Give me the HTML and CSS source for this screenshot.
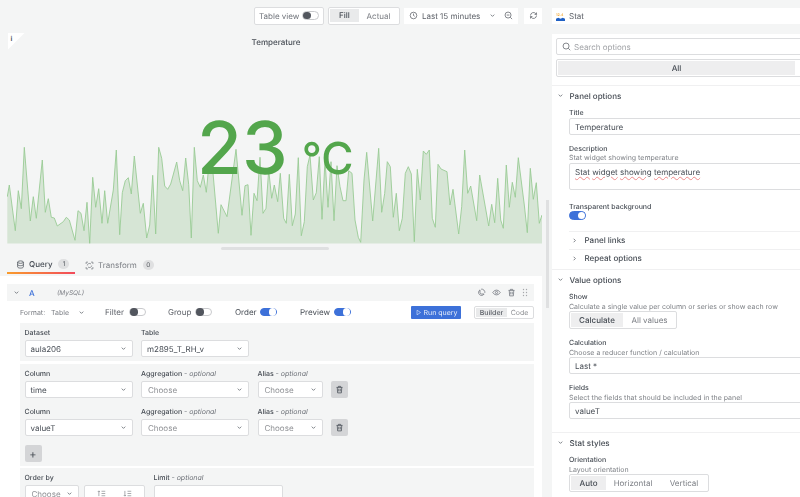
FILE: index.html
```html
<!DOCTYPE html>
<html lang="en">
<head>
  <meta charset="UTF-8">
  <title>Edit panel</title>
  <link rel="stylesheet" href="styles.css">
</head>
<body>
  <div class="page">
    <div class="main">
      <div class="toolbar">
        <div class="box table-view">Table view <span class="switch"></span></div>
        <div class="box seg-fill"><span class="seg-on">Fill</span><span class="seg-off">Actual</span></div>
        <div class="time-group">
          <div class="tool time-btn">
            <svg class="ico" viewBox="0 0 12 12"><circle cx="6" cy="6" r="4.4"/><path d="M6 3.4V6l1.6 1"/></svg>
            Last 15 minutes
            <svg class="chev" viewBox="0 0 8 8"><path d="M2 3l2 2 2-2"/></svg>
          </div>
          <div class="tool zoom-btn">
            <svg class="ico" viewBox="0 0 12 12"><circle cx="5.4" cy="5.4" r="4"/><path d="M3.6 5.4h3.6M8.4 8.4l2.4 2.4"/></svg>
          </div>
        </div>
        <div class="tool refresh-btn">
          <svg class="ico" viewBox="0 0 12 12"><path d="M2 6a4 4 0 0 1 7-2.6l1 1M10 6a4 4 0 0 1-7 2.6l-1-1M10 2v2.6H7.4M2 10V7.4h2.6"/></svg>
        </div>
      </div>

      <div class="panel">
        <div class="corner"><span>i</span></div>
        <div class="panel-title">Temperature</div>
        <svg class="chart" viewBox="7 146 535 98">
          <polygon class="area" points="7.3,243.5 7.3,196.7 9.3,185 15.3,230.7 18.3,190.7 21.3,208.7 24.3,147.3 30.3,221 33.3,196.7 36.3,218.3 42.3,160 45.3,212.3 48.3,198.7 51.3,217.3 54.3,218 57.3,226 63.3,221.7 66.3,217.3 69.3,220 75,240.3 78,210.7 81,213.3 84,230.7 87,202.3 89.7,243.3 92.7,177.3 95.7,207.3 98.7,188.7 102,223.3 104.7,190.7 107.7,223.3 113.3,190 116.3,150 119.7,234.7 122.3,192.7 125.3,180.7 128.3,177.7 131.3,194 134.3,156 140.3,213.3 143.3,203.3 146.7,238 149.7,225 152.7,175.3 155.7,234 158.7,147.3 161.7,158.3 164.7,186 167.7,189.3 170.7,184 176.7,162 179.7,180.7 182.7,190.7 185.7,158 188.7,184.7 191.3,238 194.3,147.3 197.3,180.7 200.3,187.3 203.3,175 206.3,192.3 209,163 212.3,165 218.3,233.3 221,204.7 227,216.7 236,149.3 242,215.3 245,185.7 248,184.7 251,235.3 254,193.3 257,200.7 260,157.3 263,213.3 266,208.3 268.7,170 271.7,198.3 274.3,185 277.7,201.7 280.3,173.3 283.7,218.3 286.3,223.3 289.3,174.3 292.3,225.7 295.3,214 298.3,157.7 301.3,235.7 304.3,221.7 307.3,166.7 310,155 313.3,200 316.3,192.7 319.3,156.7 322,219.3 325,160 328,207.3 331,161.7 334,220.7 337,165.7 340,186.7 343,200.7 346,200.7 348.7,170.7 352,173.3 355,220 358.3,237.3 360.7,242.3 364,180 366.7,152.3 372.7,221 378.7,148.3 381.7,212.3 384.7,193.3 387.3,161.7 390.3,166.7 393.3,217.3 396.3,193.3 399.3,230.7 402.3,218.3 405.3,173.3 408.3,166.7 411.3,174 414.3,241.7 417.3,169.3 420.3,200 423.3,151 426.3,154.3 429.3,150 432.3,218.3 435.3,227.3 438,164.3 441,169 447,171.7 450,205 453,189.3 458.7,234 461.7,206.7 464.7,150 467.7,193.3 470.7,186 476.7,220.7 479.7,175 488.7,226 491.7,204.3 494.7,222.7 497.7,178.3 500.7,220 503.3,228.3 506.3,165 509.3,207.3 512.3,182.3 515.3,197.3 518.3,157.7 524.3,205 527.3,232.7 530.3,168.3 533.3,199.3 536.3,182.7 539.3,223.3 542,215 542,243.5"/>
          <polyline class="line" points="7.3,196.7 9.3,185 15.3,230.7 18.3,190.7 21.3,208.7 24.3,147.3 30.3,221 33.3,196.7 36.3,218.3 42.3,160 45.3,212.3 48.3,198.7 51.3,217.3 54.3,218 57.3,226 63.3,221.7 66.3,217.3 69.3,220 75,240.3 78,210.7 81,213.3 84,230.7 87,202.3 89.7,243.3 92.7,177.3 95.7,207.3 98.7,188.7 102,223.3 104.7,190.7 107.7,223.3 113.3,190 116.3,150 119.7,234.7 122.3,192.7 125.3,180.7 128.3,177.7 131.3,194 134.3,156 140.3,213.3 143.3,203.3 146.7,238 149.7,225 152.7,175.3 155.7,234 158.7,147.3 161.7,158.3 164.7,186 167.7,189.3 170.7,184 176.7,162 179.7,180.7 182.7,190.7 185.7,158 188.7,184.7 191.3,238 194.3,147.3 197.3,180.7 200.3,187.3 203.3,175 206.3,192.3 209,163 212.3,165 218.3,233.3 221,204.7 227,216.7 236,149.3 242,215.3 245,185.7 248,184.7 251,235.3 254,193.3 257,200.7 260,157.3 263,213.3 266,208.3 268.7,170 271.7,198.3 274.3,185 277.7,201.7 280.3,173.3 283.7,218.3 286.3,223.3 289.3,174.3 292.3,225.7 295.3,214 298.3,157.7 301.3,235.7 304.3,221.7 307.3,166.7 310,155 313.3,200 316.3,192.7 319.3,156.7 322,219.3 325,160 328,207.3 331,161.7 334,220.7 337,165.7 340,186.7 343,200.7 346,200.7 348.7,170.7 352,173.3 355,220 358.3,237.3 360.7,242.3 364,180 366.7,152.3 372.7,221 378.7,148.3 381.7,212.3 384.7,193.3 387.3,161.7 390.3,166.7 393.3,217.3 396.3,193.3 399.3,230.7 402.3,218.3 405.3,173.3 408.3,166.7 411.3,174 414.3,241.7 417.3,169.3 420.3,200 423.3,151 426.3,154.3 429.3,150 432.3,218.3 435.3,227.3 438,164.3 441,169 447,171.7 450,205 453,189.3 458.7,234 461.7,206.7 464.7,150 467.7,193.3 470.7,186 476.7,220.7 479.7,175 488.7,226 491.7,204.3 494.7,222.7 497.7,178.3 500.7,220 503.3,228.3 506.3,165 509.3,207.3 512.3,182.3 515.3,197.3 518.3,157.7 524.3,205 527.3,232.7 530.3,168.3 533.3,199.3 536.3,182.7 539.3,223.3 542,215"/>
        </svg>
        <div class="big-value"><span class="digits">23</span><span class="unit">°C</span></div>
      </div>
      <div class="resize-handle"></div>

      <div class="tabs">
        <div class="tab tab-active">
          <svg class="ico" viewBox="0 0 12 12"><ellipse cx="6" cy="2.8" rx="3.8" ry="1.6"/><path d="M2.2 2.8v6.4c0 .9 1.7 1.6 3.8 1.6s3.8-.7 3.8-1.6V2.8M2.2 6c0 .9 1.7 1.6 3.8 1.6S9.8 6.9 9.8 6"/></svg>
          Query <span class="count">1</span>
        </div>
        <div class="tab">
          <svg class="ico" viewBox="0 0 12 12"><path d="M1.5 4V1.5H4M8 1.5h2.5V4M10.5 8v2.5H8M4 10.5H1.5V8M3 6a3 3 0 0 1 5-2M9 6a3 3 0 0 1-5 2"/></svg>
          Transform <span class="count">0</span>
        </div>
      </div>

      <div class="query-card">
        <div class="query-head">
          <svg class="chev" viewBox="0 0 8 8"><path d="M2 3l2 2 2-2"/></svg>
          <span class="query-ref">A</span>
          <span class="query-ds">(MySQL)</span>
          <div class="query-actions">
            <svg class="ico" viewBox="0 0 12 12"><path d="M4 2.5a4 4 0 1 0 5.5 5.5H6a2 2 0 0 1-2-2zM5.5 1.5a4.5 4.5 0 0 1 5 5"/></svg>
            <svg class="ico" viewBox="0 0 12 12"><path d="M1 6s1.8-3.2 5-3.2S11 6 11 6 9.2 9.2 6 9.2 1 6 1 6z"/><circle cx="6" cy="6" r="1.5"/></svg>
            <svg class="ico" viewBox="0 0 12 12"><path d="M2 3.2h8M4.5 3V1.8h3V3M3 3.2l.5 7.300h5L9 3.200M5 5v3.500M7 5v3.500"/></svg>
            <svg class="grip" viewBox="0 0 8 12"><circle cx="2" cy="2" r=".9"/><circle cx="6" cy="2" r=".9"/><circle cx="2" cy="6" r=".9"/><circle cx="6" cy="6" r=".9"/><circle cx="2" cy="10" r=".9"/><circle cx="6" cy="10" r=".9"/></svg>
          </div>
        </div>

        <div class="query-opts">
          <span class="fmt-label">Format:</span>
          <span class="fmt-value">Table <svg class="chev" viewBox="0 0 8 8"><path d="M2 3l2 2 2-2"/></svg></span>
          <span class="opt opt-filter">Filter <span class="switch"></span></span>
          <span class="opt opt-group">Group <span class="switch"></span></span>
          <span class="opt opt-order">Order <span class="switch switch-on"></span></span>
          <span class="opt opt-preview">Preview <span class="switch switch-on"></span></span>
          <span class="run-btn">
            <svg class="ico" viewBox="0 0 12 12"><path d="M3.5 2l6 4-6 4z"/></svg>
            Run query
          </span>
          <span class="box mode"><span class="mode-on">Builder</span><span class="mode-off">Code</span></span>
        </div>

        <div class="group-box dataset-box">
          <div class="sql-grid">
            <div>
              <div class="label">Dataset</div>
              <div class="select">aula206<svg class="chev" viewBox="0 0 8 8"><path d="M2 3l2 2 2-2"/></svg></div>
            </div>
            <div>
              <div class="label">Table</div>
              <div class="select">m2895_T_RH_v<svg class="chev" viewBox="0 0 8 8"><path d="M2 3l2 2 2-2"/></svg></div>
            </div>
          </div>
        </div>

        <div class="group-box columns-box">
          <div class="sql-grid">
            <div>
              <div class="label">Column</div>
              <div class="select">time<svg class="chev" viewBox="0 0 8 8"><path d="M2 3l2 2 2-2"/></svg></div>
            </div>
            <div>
              <div class="label">Aggregation <em>- optional</em></div>
              <div class="select placeholder">Choose<svg class="chev" viewBox="0 0 8 8"><path d="M2 3l2 2 2-2"/></svg></div>
            </div>
            <div>
              <div class="label">Alias <em>- optional</em></div>
              <div class="select placeholder">Choose<svg class="chev" viewBox="0 0 8 8"><path d="M2 3l2 2 2-2"/></svg></div>
            </div>
            <div class="square-btn">
              <svg class="ico" viewBox="0 0 12 12"><path d="M2 3.2h8M4.5 3V1.8h3V3M3 3.2l.5 7.3h5L9 3.2M5 5v3.5M7 5v3.5"/></svg>
            </div>
          </div>
          <div class="sql-grid sql-row">
            <div>
              <div class="label">Column</div>
              <div class="select">valueT<svg class="chev" viewBox="0 0 8 8"><path d="M2 3l2 2 2-2"/></svg></div>
            </div>
            <div>
              <div class="label">Aggregation <em>- optional</em></div>
              <div class="select placeholder">Choose<svg class="chev" viewBox="0 0 8 8"><path d="M2 3l2 2 2-2"/></svg></div>
            </div>
            <div>
              <div class="label">Alias <em>- optional</em></div>
              <div class="select placeholder">Choose<svg class="chev" viewBox="0 0 8 8"><path d="M2 3l2 2 2-2"/></svg></div>
            </div>
            <div class="square-btn">
              <svg class="ico" viewBox="0 0 12 12"><path d="M2 3.2h8M4.5 3V1.8h3V3M3 3.2l.5 7.3h5L9 3.2M5 5v3.5M7 5v3.5"/></svg>
            </div>
          </div>
          <div class="square-btn add-btn">+</div>
        </div>

        <div class="group-box order-box">
          <div class="order-row">
            <div class="order-by">
              <div class="label">Order by</div>
              <div class="select placeholder">Choose<svg class="chev" viewBox="0 0 8 8"><path d="M2 3l2 2 2-2"/></svg></div>
            </div>
            <div class="order-sort">
              <div class="select sort-box">
                <svg class="ico" viewBox="0 0 12 12"><path d="M2.5 9.5v-7M1 4l1.5-1.5L4 4M6 3h5M6 6h5M6 9h5"/></svg>
                <svg class="ico" viewBox="0 0 12 12"><path d="M2.5 2.5v7M1 8l1.5 1.5L4 8M6 3h5M6 6h5M6 9h5"/></svg>
              </div>
            </div>
            <div class="order-limit">
              <div class="label">Limit <em>- optional</em></div>
              <div class="select"></div>
            </div>
          </div>
        </div>
      </div>
    </div>

    <div class="side">
      <div class="viz-head">
        <svg class="viz-logo" viewBox="0 0 10 10"><text x="0" y="4" class="viz-num">12.4</text><path d="M0 7.5l2.5-1 2.5 1 2.5-1 2.5 1V10H0z" fill="#1f60c4"/></svg>
        Stat
      </div>
      <div class="options">
        <div class="options-top">
          <div class="input search">
            <svg class="ico" viewBox="0 0 12 12"><circle cx="5.4" cy="5.4" r="4"/><path d="M8.4 8.4l2.6 2.6"/></svg>
            Search options
          </div>
          <div class="box all-tabs"><span class="all-on">All</span></div>
        </div>

        <div class="section section-panel">
          <div class="section-head"><svg class="chev" viewBox="0 0 8 8"><path d="M2 3l2 2 2-2"/></svg>Panel options</div>
          <div class="field">
            <div class="label">Title</div>
            <div class="input">Temperature</div>
          </div>
          <div class="field">
            <div class="label">Description</div>
            <div class="hint">Stat widget showing temperature</div>
            <div class="input textarea"><u>Stat</u> <u>widget</u> <u>showing</u> <u>temperature</u></div>
          </div>
          <div class="field field-switch">
            <div class="label">Transparent background</div>
            <span class="switch switch-on"></span>
          </div>
          <div class="sub-head sub-first"><svg class="chev" viewBox="0 0 8 8"><path d="M3 2l2 2-2 2"/></svg>Panel links</div>
          <div class="sub-head"><svg class="chev" viewBox="0 0 8 8"><path d="M3 2l2 2-2 2"/></svg>Repeat options</div>
        </div>

        <div class="section section-value">
          <div class="section-head"><svg class="chev" viewBox="0 0 8 8"><path d="M2 3l2 2 2-2"/></svg>Value options</div>
          <div class="field">
            <div class="label">Show</div>
            <div class="hint">Calculate a single value per column or series or show each row</div>
            <div class="box radio"><span class="radio-on show-a">Calculate</span><span class="radio-off show-b">All values</span></div>
          </div>
          <div class="field">
            <div class="label">Calculation</div>
            <div class="hint">Choose a reducer function / calculation</div>
            <div class="input">Last *</div>
          </div>
          <div class="field">
            <div class="label">Fields</div>
            <div class="hint">Select the fields that should be included in the panel</div>
            <div class="input">valueT</div>
          </div>
        </div>

        <div class="section">
          <div class="section-head"><svg class="chev" viewBox="0 0 8 8"><path d="M2 3l2 2 2-2"/></svg>Stat styles</div>
          <div class="field">
            <div class="label">Orientation</div>
            <div class="hint">Layout orientation</div>
            <div class="box radio"><span class="radio-on ori-a">Auto</span><span class="radio-off ori-b">Horizontal</span><span class="radio-off ori-c">Vertical</span></div>
          </div>
        </div>
      </div>
    </div>
    <div class="scrollbar"></div>
  </div>
</body>
</html>
```

FILE: styles.css
```css
* {
  box-sizing: border-box;
}

html, body {
  margin: 0;
  height: 497px;
  overflow: hidden;
}

body {
  font-family: Inter, "Noto Sans", sans-serif;
  font-size: 8px;
  color: #464c54;
  background-color: #f4f5f5;
  white-space: nowrap;
  text-rendering: geometricPrecision;
}

.page {
  display: flex;
  position: relative;
  width: 800px;
  height: 497px;
  overflow: hidden;
  filter: blur(0.3px);
}

.main {
  width: 552px;
  flex: none;
}

.side {
  width: 262px;
  flex: none;
  padding-top: 8px;
}

svg {
  flex: none;
}

.ico {
  width: 9px;
  height: 9px;
  fill: none;
  stroke: currentColor;
  stroke-width: 1;
}

.chev {
  width: 7px;
  height: 7px;
  fill: none;
  stroke: #6e7279;
  stroke-width: 1;
}

/* toolbar */
.toolbar {
  display: flex;
  justify-content: flex-end;
  align-items: center;
  height: 33px;
  padding: 0 10px 2px 0;
}

.box {
  display: flex;
  align-items: center;
  background: #fff;
  border: 1.5px solid #dcdddf;
  border-radius: 2px;
}

.table-view {
  justify-content: space-between;
  width: 70px;
  height: 18px;
  padding: 0 4px;
  color: #6e7279;
}

.switch {
  display: inline-block;
  position: relative;
  flex: none;
  width: 17px;
  height: 8.5px;
  background: #fff;
  border: 1px solid #c9cacd;
  border-radius: 5px;
}

.switch::after {
  content: "";
  position: absolute;
  left: 0;
  top: -0.5px;
  width: 7.5px;
  height: 7.5px;
  border-radius: 50%;
  background: #52565e;
}

.switch-on {
  background: #3d71d9;
  border-color: #3d71d9;
}

.switch-on::after {
  left: auto;
  right: 0;
  background: #fff;
}

.seg-fill {
  width: 72px;
  height: 18px;
  margin-left: 4px;
  padding: 1px;
}

.seg-on {
  width: 29px;
  height: 13px;
  line-height: 13px;
  text-align: center;
  font-weight: 500;
  background: #e9eaeb;
}

.seg-off {
  flex: 1;
  text-align: center;
  color: #7a7d83;
}

.time-group {
  display: flex;
  margin-left: 4px;
}

.tool {
  display: flex;
  align-items: center;
  height: 16px;
  background: #fff;
  color: #5d6168;
}

.time-btn {
  width: 95px;
  padding-left: 5px;
  gap: 4px;
}

.time-btn .chev {
  margin-left: 5px;
}

.zoom-btn {
  width: 19px;
  justify-content: center;
}

.refresh-btn {
  width: 18px;
  margin-left: 6px;
  justify-content: center;
}

/* panel */
.panel {
  position: relative;
  height: 211px;
  padding-top: 4px;
}

.corner {
  position: absolute;
  left: 7.5px;
  top: 0;
  width: 17px;
  height: 17px;
  background: #fff;
  clip-path: polygon(0 0, 100% 0, 0 100%);
}

.corner span {
  display: block;
  padding: 1px 0 0 3px;
  font-size: 7px;
  font-weight: 600;
}

.panel-title {
  height: 109px;
  text-align: center;
  line-height: 10px;
  font-weight: 500;
}

.chart {
  display: block;
  width: 535px;
  height: 98px;
  margin-left: 7px;
}

.area {
  fill: #d6e5d5;
}

.line {
  fill: none;
  stroke: #98cb94;
  stroke-width: 0.9;
}

.big-value {
  position: absolute;
  left: 197px;
  top: 72px;
  display: flex;
  align-items: baseline;
  color: #53a64c;
  font-weight: 500;
}

.digits {
  font-size: 73px;
  line-height: 86px;
}

.unit {
  font-size: 44px;
  margin-left: 14px;
}

.resize-handle {
  width: 108px;
  height: 3px;
  margin: 3px 0 0 221px;
  background: #dfe0e1;
  border-radius: 2px;
}

/* query tabs */
.tabs {
  display: flex;
  height: 24px;
  margin-top: 2px;
  padding-left: 7px;
}

.tab {
  display: flex;
  align-items: center;
  gap: 4px;
  height: 17px;
  margin-top: 5px;
  margin-right: 10px;
  padding-bottom: 1px;
  color: #7a7d83;
}

.tab-active {
  width: 68px;
  padding-left: 9px;
  color: #464c54;
  font-weight: 500;
  border-bottom: 2px solid;
  border-image: linear-gradient(90deg, #f99d2c, #f2495c) 1;
}

.count {
  min-width: 11px;
  height: 10px;
  line-height: 10px;
  margin-left: 2px;
  padding: 0 3px;
  border-radius: 5px;
  background: #dfe0e1;
  font-size: 6.5px;
  font-weight: 400;
  text-align: center;
  color: #55595f;
}

.query-card {
  width: 542px;
  height: 240px;
  padding: 8px 8px 0 7px;
  background: #fff;
}

.query-head {
  display: flex;
  align-items: center;
  height: 17px;
  padding-left: 6px;
  background: #f4f5f5;
}

.query-ref {
  width: 28px;
  margin-left: 9px;
  color: #3d71d9;
  font-weight: 500;
}

.query-ds {
  font-size: 6.5px;
  font-style: italic;
  color: #7a7d83;
}

.query-actions {
  display: flex;
  align-items: center;
  gap: 6px;
  margin-left: auto;
  padding-right: 6px;
  color: #6e7279;
}

.grip {
  width: 6px;
  height: 9px;
  fill: #a5a7ab;
}

.query-opts {
  display: flex;
  align-items: center;
  height: 22px;
  padding-left: 13px;
  color: #5d6168;
}

.fmt-label {
  width: 31px;
  font-size: 7px;
  color: #7a7d83;
}

.fmt-value {
  display: flex;
  align-items: center;
  gap: 9px;
  width: 54px;
  font-size: 7px;
  color: #7a7d83;
}

.opt {
  display: flex;
  align-items: center;
  justify-content: space-between;
}

.opt-filter {
  width: 41px;
}

.opt-group {
  width: 44px;
  margin-left: 22px;
}

.opt-order {
  width: 42px;
  margin-left: 23px;
  color: #464c54;
}

.opt-preview {
  width: 51px;
  margin-left: 23px;
  color: #464c54;
}

.run-btn {
  display: flex;
  align-items: center;
  justify-content: center;
  gap: 2px;
  width: 50px;
  height: 13px;
  margin-left: 60px;
  background: #3d71d9;
  border-radius: 1px;
  color: #e4ecfa;
  font-size: 7px;
}

.run-btn .ico {
  width: 7px;
  height: 7px;
}

.mode {
  width: 60px;
  height: 13px;
  margin-left: 13px;
  padding: 1px;
  font-size: 7px;
}

.mode-on {
  width: 31px;
  line-height: 9px;
  text-align: center;
  background: #e9eaeb;
  font-weight: 500;
}

.mode-off {
  flex: 1;
  text-align: center;
  color: #8e9094;
}

.group-box {
  margin-left: 13px;
  padding-left: 4.5px;
  background: #f4f5f5;
}

.dataset-box {
  height: 38px;
  padding-top: 4px;
}

.columns-box {
  height: 102px;
  margin-top: 3px;
  padding-top: 4px;
}

.order-box {
  height: 40px;
  margin-top: 2px;
  padding-top: 4px;
}

.sql-grid {
  display: grid;
  grid-template-columns: 108px 108px 65px 17px;
  column-gap: 8.5px;
  align-items: end;
}

.sql-row {
  margin-top: 8px;
}

.label {
  height: 13px;
  line-height: 12px;
  font-size: 7px;
  font-weight: 500;
  color: #464c54;
}

.label em {
  font-weight: 400;
  color: #6e7279;
}

.select {
  display: flex;
  align-items: center;
  justify-content: space-between;
  height: 17px;
  padding: 0 5px;
  background: #fff;
  border: 1px solid #dcdddf;
  border-radius: 2px;
  color: #464c54;
}

.placeholder {
  padding-left: 6px;
  color: #8e9094;
}

.square-btn {
  display: flex;
  align-items: center;
  justify-content: center;
  width: 17px;
  height: 17px;
  background: #d4d5d7;
  border-radius: 2px;
  color: #464c54;
}

.add-btn {
  margin-top: 9px;
  font-size: 11px;
}

.order-row {
  display: flex;
}

.order-by {
  width: 54px;
}

.order-sort {
  width: 61px;
  margin: 13px 0 0 5px;
}

.sort-box {
  padding: 0 12px;
  color: #8e9094;
}

.order-limit {
  width: 129px;
  margin-left: 9px;
}

/* visualization options */
.viz-head {
  display: flex;
  align-items: center;
  gap: 4px;
  width: 262px;
  height: 16px;
  padding-left: 4px;
  background: #fff;
  color: #5d6168;
}

.viz-logo {
  width: 9px;
  height: 9px;
}

.viz-num {
  font-size: 4px;
  font-weight: 600;
  fill: #f2a52c;
}

.options {
  height: 470px;
  margin-top: 10px;
  background: #fff;
}

.options-top {
  padding: 4px 0 8px 4px;
  border-bottom: 1px solid #f0f0f1;
}

.input {
  display: flex;
  align-items: center;
  width: 258px;
  height: 17px;
  padding-left: 5px;
  padding-top: 1px;
  background: #fff;
  border: 1px solid #dcdddf;
  border-radius: 2px;
}

.search {
  gap: 3px;
  padding-top: 0;
  color: #a0a2a6;
}

.search .ico {
  color: #5d6168;
}

.all-tabs {
  width: 258px;
  height: 18px;
  margin-top: 4px;
  padding: 1px;
}

.all-on {
  width: 237px;
  line-height: 14px;
  text-align: center;
  background: #eeeeef;
  font-weight: 500;
}

.section {
  padding-bottom: 12px;
  border-bottom: 1px solid #f0f0f1;
}

.section-panel {
  padding-bottom: 2.5px;
}

.section-value {
  padding-bottom: 13px;
}

.section-head {
  display: flex;
  align-items: center;
  height: 19px;
  padding-left: 5px;
  font-weight: 500;
}

.section-head .chev {
  margin-right: 5.5px;
}

.field {
  margin-top: 2px;
  padding-left: 17px;
}

.field + .field {
  margin-top: 8px;
}

.side .label {
  height: 9.5px;
}

.hint {
  height: 9.5px;
  line-height: 12px;
  font-size: 7px;
  color: #7f8287;
}

.field .input {
  margin-top: 1px;
}

.field .textarea {
  display: block;
  height: 27px;
  padding-top: 3px;
  line-height: 10px;
}

.textarea u {
  text-decoration: underline wavy #ef8b8b 0.7px;
}

.field + .field-switch {
  margin-top: 11px;
}

.field-switch .switch {
  display: block;
  margin-top: 1px;
}

.sub-head {
  display: flex;
  align-items: center;
  height: 18px;
  margin-left: 17px;
  font-weight: 500;
  border-top: 1px solid #f0f0f1;
}

.sub-head .chev {
  margin: 0 6.5px 0 2px;
}

.sub-first {
  margin-top: 11px;
}

.radio {
  width: max-content;
  height: 18px;
  margin-top: 1px;
  padding: 1px 0 1px 1px;
}

.radio-on {
  line-height: 14px;
  text-align: center;
  background: #eeeeef;
  font-weight: 500;
}

.radio-off {
  text-align: center;
  color: #7a7d83;
}

.show-a {
  width: 52px;
}

.show-b {
  width: 53px;
}

.ori-a {
  width: 35px;
}

.ori-b {
  width: 54px;
}

.ori-c {
  width: 48px;
}

.scrollbar {
  position: absolute;
  left: 546px;
  top: 200px;
  width: 3px;
  height: 108px;
  background: #dfe0e1;
}
```
